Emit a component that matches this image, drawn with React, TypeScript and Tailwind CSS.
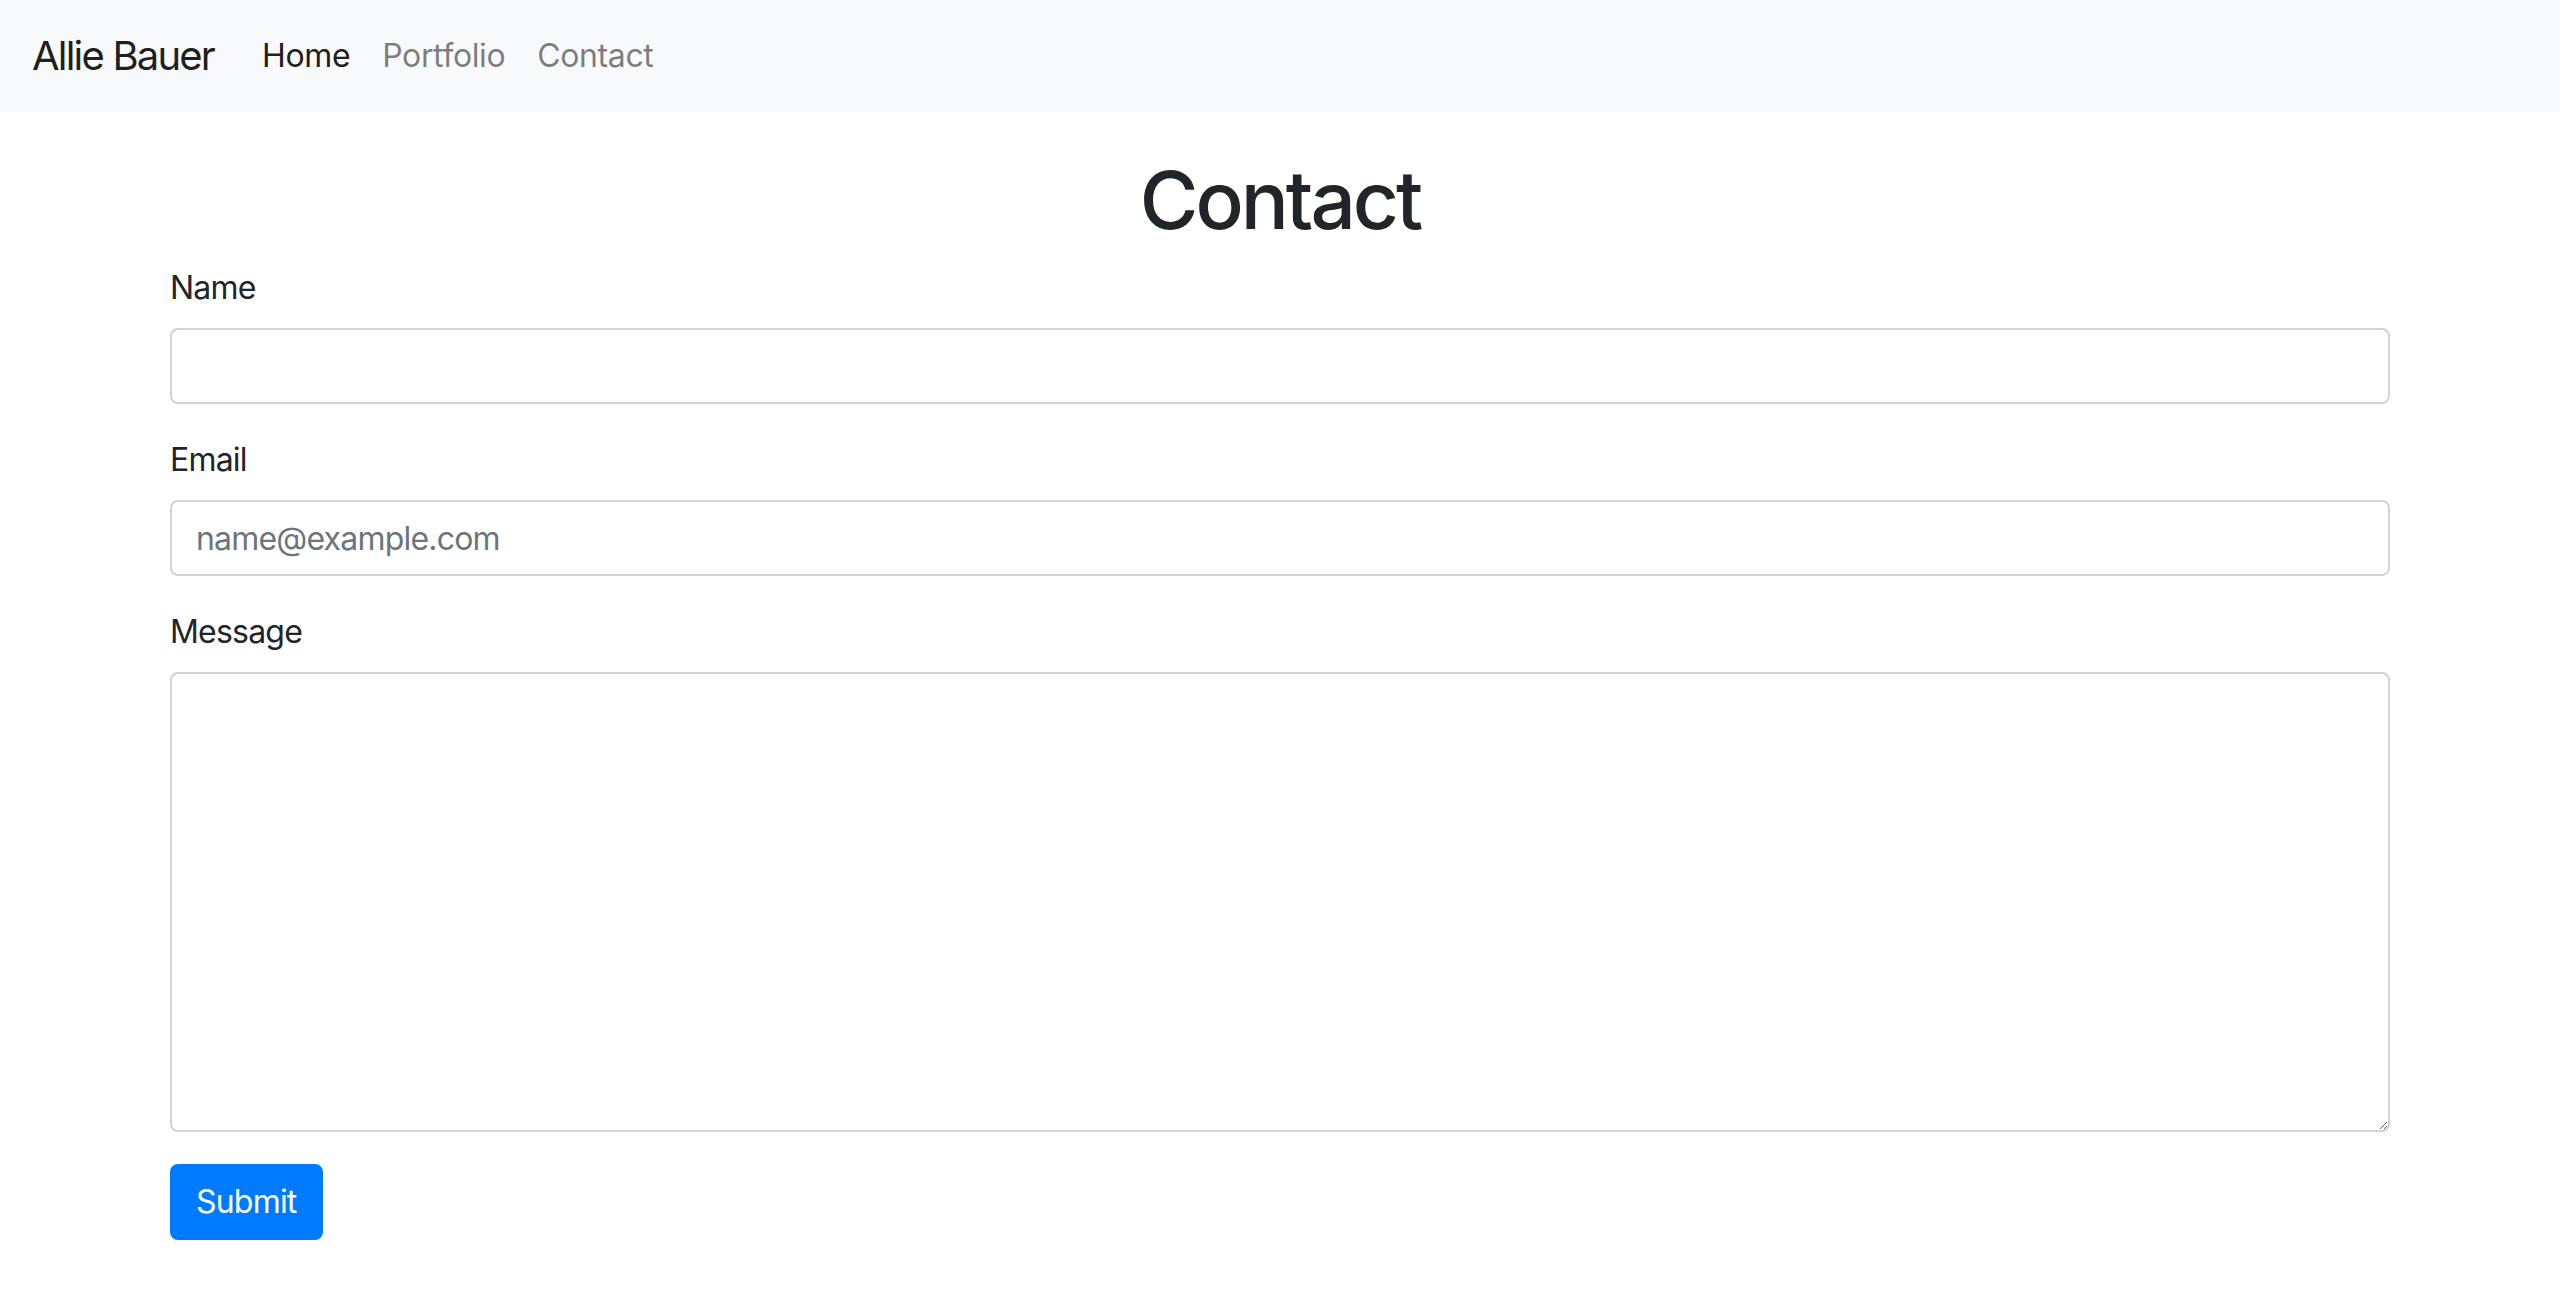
import { useState } from "react";

const links = [
  { label: "Home", active: true },
  { label: "Portfolio", active: false },
  { label: "Contact", active: false },
];

export default function App() {
  const [name, setName] = useState("");
  const [email, setEmail] = useState("");
  const [message, setMessage] = useState("");

  return (
    <div className="min-h-screen bg-white font-['Inter','Liberation_Sans',sans-serif] text-[32px] leading-[1.5] tracking-[-0.025em] text-[#212529]">
      <nav className="flex items-center bg-[#f8f9fa] px-[32px] py-[16px]">
        <a href="#" className="mr-[32px] py-[10px] text-[40px] leading-[1.5] tracking-[-0.045em] text-black/90">
          Allie Bauer
        </a>
        <ul className="flex tracking-[-0.012em]">
          {links.map((l) => (
            <li key={l.label}>
              <a
                href="#"
                className={
                  l.active
                    ? "block px-[16px] py-[16px] text-black/90"
                    : "block px-[16px] py-[16px] text-black/50"
                }
              >
                {l.label}
              </a>
            </li>
          ))}
        </ul>
      </nav>

      <main className="mx-auto w-[2220px] pt-[40px]">
        <h1 className="mb-[16px] text-center text-[80px] font-medium leading-[1.2] tracking-[-0.038em]">Contact</h1>
        <form onSubmit={(e) => e.preventDefault()}>
          <div className="mb-[32px]">
            <label htmlFor="name" className="mb-[16px] block">
              Name
            </label>
            <input
              id="name"
              value={name}
              onChange={(e) => setName(e.target.value)}
              className="block h-[76px] w-full rounded-[8px] border-2 border-[#ced4da] px-[24px] py-[12px] outline-none"
            />
          </div>
          <div className="mb-[32px]">
            <label htmlFor="email" className="mb-[16px] block">
              Email
            </label>
            <input
              id="email"
              type="email"
              value={email}
              onChange={(e) => setEmail(e.target.value)}
              placeholder="name@example.com"
              className="block h-[76px] w-full rounded-[8px] border-2 border-[#ced4da] px-[24px] py-[12px] outline-none placeholder:text-[#6c757d]"
            />
          </div>
          <div className="mb-[32px]">
            <label htmlFor="message" className="mb-[16px] block">
              Message
            </label>
            <textarea
              id="message"
              value={message}
              onChange={(e) => setMessage(e.target.value)}
              className="block h-[460px] w-full rounded-[8px] border-2 border-[#ced4da] px-[24px] py-[12px] outline-none"
            />
          </div>
          <button
            type="submit"
            className="h-[76px] rounded-[8px] border-2 border-[#007bff] bg-[#007bff] px-[24px] text-white"
          >
            Submit
          </button>
        </form>
      </main>
    </div>
  );
}
